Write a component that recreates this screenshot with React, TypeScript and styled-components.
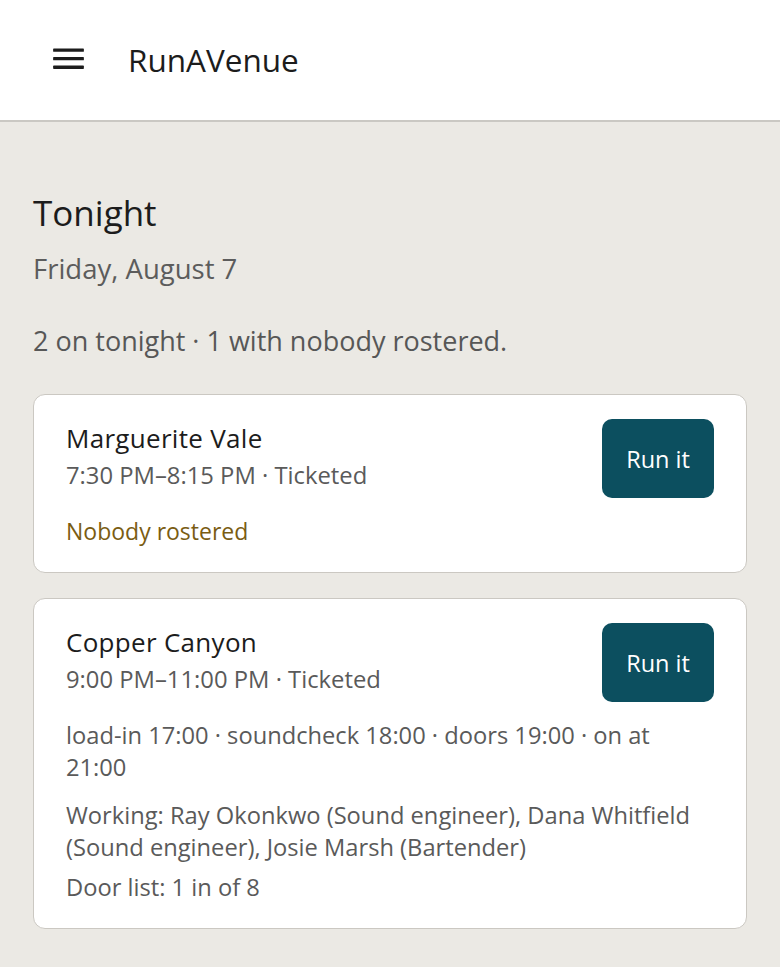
import React from "react";
import styled, { createGlobalStyle } from "styled-components";

const Global = createGlobalStyle`
  html, body { margin: 0; padding: 0; }
  body {
    background: #ebe9e4;
    font-family: "Open Sans", "Noto Sans", sans-serif;
    color: #1c1c1c;
  }
  * { box-sizing: border-box; }
`;

const Header = styled.header`
  height: 122px;
  background: #ffffff;
  border-bottom: 2px solid #cac8c3;
  display: flex;
  align-items: center;
  padding: 0 0 2px 48px;
  gap: 39px;
`;

const MenuButton = styled.button`
  width: 41px;
  height: 41px;
  padding: 0;
  border: 0;
  background: transparent;
  display: flex;
  align-items: center;
  justify-content: center;
  color: #1c1c1c;
`;

const Brand = styled.div`
  font-size: 31.5px;
  color: #1c1c1c;
`;

const Main = styled.main`
  padding: 70px 33px 38px;
  display: flex;
  flex-direction: column;
`;

const Title = styled.h1`
  margin: 0;
  font-size: 35px;
  font-weight: 400;
  line-height: 1.2;
  color: #1c1c1c;
`;

const DateLine = styled.div`
  margin-top: 16px;
  font-size: 27.5px;
  color: #5c5c5c;
`;

const Summary = styled.p`
  margin: 35px 0 35px;
  font-size: 27px;
  color: #575757;
`;

const List = styled.div`
  display: flex;
  flex-direction: column;
  gap: 25px;
`;

const Card = styled.section`
  background: #ffffff;
  border: 1.5px solid #cbc8c2;
  border-radius: 12px;
  padding: 24px 32px 25px;
`;

const CardTop = styled.div`
  display: flex;
  justify-content: space-between;
  align-items: flex-start;
  gap: 16px;
  margin-bottom: 17px;
`;

const Name = styled.h2`
  margin: 4px 0 0;
  font-size: 26px;
  font-weight: 400;
  letter-spacing: 0.3px;
  line-height: 30px;
  color: #1c1c1c;
`;

const Meta = styled.div`
  margin-top: 6px;
  font-size: 23.8px;
  line-height: 32px;
  color: #5a5a5a;
`;

const RunButton = styled.button`
  width: 112px;
  height: 79px;
  border: 0;
  border-radius: 10px;
  background: #0c4f5f;
  color: #ffffff;
  font-family: inherit;
  font-size: 23.5px;
  flex-shrink: 0;
`;

const Line = styled.p<{ $tone?: "warn" | "muted"; $gap: number; $size?: number }>`
  margin: ${(p) => p.$gap}px 0 0;
  font-size: ${(p) => p.$size ?? 23.7}px;
  line-height: 32px;
  color: ${(p) => (p.$tone === "warn" ? "#7a5c12" : "#5a5a5a")};
`;

const MenuIcon = () => (
  <svg width="41" height="41" viewBox="0 0 24 24" fill="currentColor">
    <rect x="3" y="5.5" width="18" height="2" rx="0.4" />
    <rect x="3" y="10.5" width="18" height="2" rx="0.4" />
    <rect x="3" y="15.5" width="18" height="2" rx="0.4" />
  </svg>
);

export default function App() {
  return (
    <>
      <Global />
      <Header>
        <MenuButton aria-label="Menu">
          <MenuIcon />
        </MenuButton>
        <Brand>RunAVenue</Brand>
      </Header>
      <Main>
        <Title>Tonight</Title>
        <DateLine>Friday, August 7</DateLine>
        <Summary>2 on tonight · 1 with nobody rostered.</Summary>
        <List>
          <Card>
            <CardTop>
              <div>
                <Name>Marguerite Vale</Name>
                <Meta>7:30 PM–8:15 PM · Ticketed</Meta>
              </div>
              <RunButton>Run it</RunButton>
            </CardTop>
            <Line $tone="warn" $gap={0} $size={23}>Nobody rostered</Line>
          </Card>
          <Card>
            <CardTop>
              <div>
                <Name>Copper Canyon</Name>
                <Meta>9:00 PM–11:00 PM · Ticketed</Meta>
              </div>
              <RunButton>Run it</RunButton>
            </CardTop>
            <Line $gap={0}>load-in 17:00 · soundcheck 18:00 · doors 19:00 · on at 21:00</Line>
            <Line $gap={16}>
              Working: Ray Okonkwo (Sound engineer), Dana Whitfield (Sound engineer), Josie Marsh (Bartender)
            </Line>
            <Line $gap={8}>Door list: 1 in of 8</Line>
          </Card>
        </List>
      </Main>
    </>
  );
}
